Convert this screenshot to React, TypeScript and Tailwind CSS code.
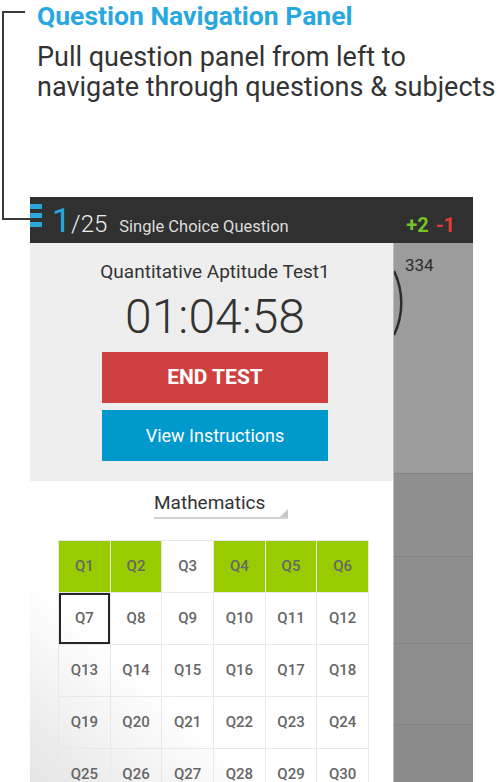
const greens = new Set([1, 2, 4, 5, 6]);

function Hamburger() {
  return (
    <div className="mt-[7px] flex w-[12px] flex-col gap-[4.5px] self-start">
      <div className="h-[4.5px] w-[12px] rounded-r-[1px] bg-[#29a8e0]" />
      <div className="h-[4.5px] w-[12px] rounded-r-[1px] bg-[#29a8e0]" />
      <div className="h-[4.5px] w-[12px] rounded-r-[1px] bg-[#29a8e0]" />
    </div>
  );
}

function QuestionGrid() {
  const items = Array.from({ length: 30 }, (_, i) => i + 1);
  return (
    <div className="ml-[28px] mt-[21px] grid w-[311px] shrink-0 grid-cols-6 border-l border-t border-[#e8e8e8]">
      {items.map((n) => (
        <div
          key={n}
          className={
            "flex h-[52px] items-center justify-center border-b border-r border-[#e8e8e8] text-[15px] font-medium text-[#666666] " +
            (greens.has(n) ? "bg-[#99cc00] " : "") +
            (n === 7 ? "shadow-[inset_0_0_0_2px_#262626]" : "")
          }
        >
          Q{n}
        </div>
      ))}
    </div>
  );
}

export default function App() {
  return (
    <div className="flex h-[782px] w-[500px] overflow-hidden bg-white font-['Roboto',sans-serif]">
      {/* callout bracket */}
      <div className="w-[30px] shrink-0 pl-[2px] pt-[11px]">
        <div className="h-[2px] w-[23px] bg-[#3a3a3a]" />
        <div className="h-[207px] w-[28px] border-b-2 border-l-2 border-[#3a3a3a]" />
      </div>

      <div className="flex w-[470px] shrink-0 flex-col">
        <div className="whitespace-nowrap pl-[7px]">
          <h1 className="text-[26.5px] font-bold leading-[31px] text-[#29a8e0]">
            Question Navigation Panel
          </h1>
          <p className="mt-[11px] text-[27px] leading-[30px] text-[#333333]">
            Pull question panel from left to
            <br />
            navigate through questions &amp; subjects
          </p>
        </div>

        {/* phone screen */}
        <div className="mt-[95px] flex w-[443px] flex-col">
          <div className="flex h-[46px] shrink-0 items-baseline bg-[#303030] pr-[18px]">
            <Hamburger />
            <span className="ml-[10px] text-[34px] leading-[46px] text-[#29a8e0]">1</span>
            <span className="text-[24px] font-light text-[#eeeeee]">/25</span>
            <span className="ml-[12px] text-[16.5px] text-[#dddddd]">Single Choice Question</span>
            <span className="ml-auto text-[20px] font-bold text-[#77c228]">+2</span>
            <span className="ml-[7px] text-[20px] font-bold text-[#e03a3a]">-1</span>
          </div>

          <div className="flex h-[539px]">
            <div className="flex w-[363px] flex-col">
              <div className="flex h-[238px] shrink-0 flex-col items-center bg-[#eeeeee] pl-[7px] pt-[18px]">
                <div className="text-[19px] leading-[22px] text-[#333333]">
                  Quantitative Aptitude Test1
                </div>
                <div className="mt-[10px] text-[48px] font-light leading-[48px] text-[#333333]">
                  01:04:58
                </div>
                <button className="mt-[11px] flex h-[51px] w-[226px] items-center justify-center bg-[#cf4040] text-[21px] font-bold text-white">
                  END TEST
                </button>
                <button className="mt-[7px] flex h-[51px] w-[226px] items-center justify-center bg-[#0099cc] text-[18px] text-white">
                  View Instructions
                </button>
              </div>

              <div className="flex flex-1 flex-col bg-[linear-gradient(to_top_right,#e2e2e2_0%,#ffffff_35%)]">
                <div className="relative ml-[124px] mt-[11px] w-[134px] border-b-2 border-[#d2d2d2] pb-[3px] text-[19px] leading-[22px] text-[#333333]">
                  Mathematics
                  <svg className="absolute bottom-0 right-0" width="8" height="8" viewBox="0 0 8 8">
                    <polygon points="8,0 8,8 0,8" fill="#c8c8c8" />
                  </svg>
                </div>
                <QuestionGrid />
              </div>
            </div>

            <div className="flex w-[80px] flex-col border-l border-[#bdbdbd]">
              <div className="flex h-[230px] shrink-0 items-start bg-[#9c9c9c]">
                <svg className="mt-[27px] shrink-0" width="9" height="66" viewBox="0 0 9 66">
                  <path d="M0 1 A 74 74 0 0 1 0 65" fill="none" stroke="#2b2b2b" strokeWidth="2.5" />
                </svg>
                <span className="ml-[2px] mt-[12px] text-[17px] leading-[20px] text-[#2d2d2d]">334</span>
              </div>
              <div className="h-[83px] shrink-0 border-t border-[#838383] bg-[#8f8f8f]" />
              <div className="h-[87px] shrink-0 border-t border-[#838383] bg-[#8e8e8e]" />
              <div className="h-[81px] shrink-0 border-t border-[#838383] bg-[#8d8d8d]" />
              <div className="flex-1 border-t border-[#838383] bg-[#8b8b8b]" />
            </div>
          </div>
        </div>
      </div>
    </div>
  );
}
